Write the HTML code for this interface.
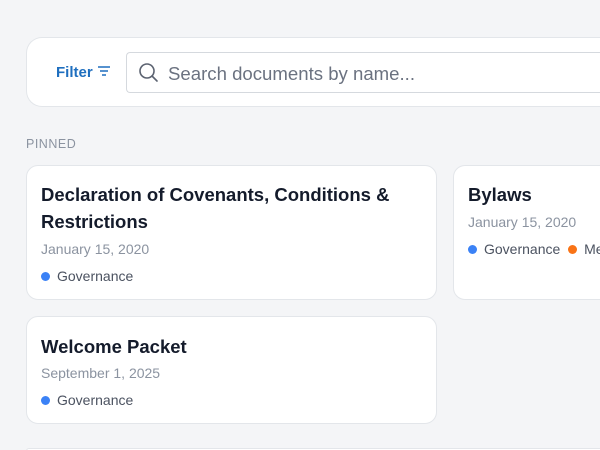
<!DOCTYPE html>
<html style="overflow:hidden;width:600px;height:450px"><head><style>
body{margin:0;width:600px;height:450px;background:#f4f5f7;font-family:"Liberation Sans",sans-serif;position:relative;overflow:hidden}
.bar{position:absolute;left:26px;top:37px;width:573px;height:68px;background:#fff;border:1px solid #e3e6ea;border-right:none;border-radius:16px 0 0 16px}
.filter{position:absolute;left:56px;top:64px;font-size:15px;font-weight:bold;color:#1f6fbf}
.search{position:absolute;left:126px;top:52px;width:473px;height:39px;border:1px solid #d5d9de;border-right:none;border-radius:4px 0 0 4px;background:#fff}
.search span{position:absolute;left:41px;top:10px;font-size:18.6px;color:#6b7280}
.pin{position:absolute;left:26px;top:137px;font-size:12.5px;color:#8b93a0;letter-spacing:.5px}
.card{position:absolute;background:#fff;border:1px solid #e3e6ea;border-radius:12px}
.t{position:absolute;left:14px;font-size:18.5px;font-weight:bold;color:#141b2b;line-height:27px}
.d{position:absolute;left:14px;font-size:14px;color:#8b93a0}
.g{position:absolute;left:14px;font-size:14px;color:#4b5260}
.dot{display:inline-block;width:9px;height:9px;border-radius:50%;background:#3b82f6;margin-right:7px;vertical-align:0px}
</style></head><body>
<div class="bar"></div>
<div class="filter">Filter <svg width="14" height="12" viewBox="0 0 14 12" style="vertical-align:0"><path d="M1 2h12M3 6h8M5 10h4" stroke="#1f6fbf" stroke-width="1.5"/></svg></div>
<div class="search"><svg width="24" height="24" viewBox="0 0 24 24" style="position:absolute;left:10px;top:8px"><circle cx="10" cy="10" r="7" fill="none" stroke="#5b6270" stroke-width="1.6"/><path d="M15 15l5 5" stroke="#5b6270" stroke-width="1.6" stroke-linecap="round"/></svg><span>Search documents by name...</span></div>
<div class="pin">PINNED</div>
<div class="card" style="left:26px;top:165px;width:409px;height:133px">
<div class="t" style="top:15px">Declaration of Covenants, Conditions &amp;<br>Restrictions</div>
<div class="d" style="top:75px">January 15, 2020</div>
<div class="g" style="top:102px"><span class="dot"></span>Governance</div></div>
<div class="card" style="left:453px;top:165px;width:146px;height:133px;border-right:none;border-radius:12px 0 0 12px;overflow:hidden">
<div class="t" style="top:15px">Bylaws</div>
<div class="d" style="top:48px;white-space:nowrap">January 15, 2020</div>
<div class="g" style="top:75px;white-space:nowrap"><span class="dot"></span>Governance &nbsp;<span class="dot" style="background:#f97316"></span>Me</div></div>
<div class="card" style="left:26px;top:316px;width:409px;height:106px">
<div class="t" style="top:16px">Welcome Packet</div>
<div class="d" style="top:48px">September 1, 2025</div>
<div class="g" style="top:75px"><span class="dot"></span>Governance</div></div>
<div style="position:absolute;left:26px;top:448px;width:573px;height:2px;background:#fff;border-top:1px solid #e3e6ea;border-left:1px solid #e3e6ea;border-radius:12px 0 0 0"></div>
</body></html>
